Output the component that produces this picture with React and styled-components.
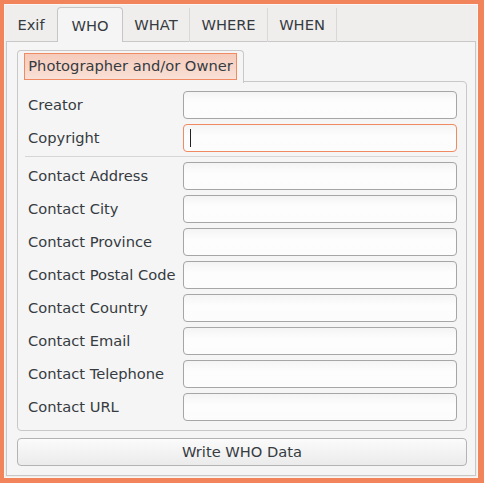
import React from 'react';
import styled, { createGlobalStyle } from 'styled-components';

const GlobalStyle = createGlobalStyle`
  body {
    margin: 0;
    font-family: "DejaVu Sans", "Liberation Sans", sans-serif;
    font-size: 14.67px;
    color: #363b41;
  }
`;

const Frame = styled.div`
  width: 484px;
  height: 483px;
  box-sizing: border-box;
  background: #f1845a;
  padding: 4px 6px 5px 4px;
`;

const Window = styled.div`
  height: 100%;
  box-sizing: border-box;
  border: 1px solid #fbf6f3;
  background: #efeeec;
  display: flex;
  flex-direction: column;
  padding: 0 1px 1px 1px;
`;

const TabBar = styled.div`
  display: flex;
  height: 37px;
  margin: 0 -1px -1px -1px;
  position: relative;
  z-index: 1;
`;

const Tab = styled.div`
  box-sizing: border-box;
  width: ${({ w }) => w}px;
  display: flex;
  align-items: center;
  justify-content: center;
  margin-top: ${({ active }) => (active ? 2 : 3)}px;
  padding-bottom: ${({ active }) => (active ? 0 : 1)}px;
  background: ${({ active }) => (active ? '#f5f5f5' : 'transparent')};
  border: ${({ active }) => (active ? '1px solid #c6c6c6' : 'none')};
  border-bottom: none;
  border-right: ${({ active, sep }) =>
    active ? '1px solid #c6c6c6' : sep ? '1px solid #d8d8d8' : 'none'};
  border-radius: ${({ active }) => (active ? '4px 4px 0 0' : '0')};
`;

const Pane = styled.div`
  flex: 1;
  border: 1px solid #c8c8c8;
  background: #f5f5f5;
  padding: 8px 8px 8px 10px;
  display: flex;
  flex-direction: column;
`;

const SubTabBar = styled.div`
  display: flex;
  height: 32px;
  margin-bottom: -1px;
  position: relative;
  z-index: 1;
`;

const SubTab = styled.div`
  box-sizing: border-box;
  width: 227px;
  height: 33px;
  border: 1px solid #c8c8c8;
  border-bottom: none;
  border-radius: 4px 4px 0 0;
  background: #f5f5f5;
  padding: 2px 6px 0 6px;
`;

const FocusLabel = styled.div`
  box-sizing: border-box;
  height: 27px;
  border: 1px solid #f08a62;
  background: linear-gradient(#f5cbbb, #f9e0d6);
  display: flex;
  align-items: center;
  justify-content: center;
  white-space: nowrap;
  padding-bottom: 2px;
`;

const GroupBox = styled.div`
  border: 1px solid #c8c8c8;
  border-radius: 0 4px 4px 4px;
  padding: 9px 9px 9px 10px;
  display: flex;
  flex-direction: column;
  gap: 5px;
`;

const Row = styled.div`
  display: flex;
  align-items: center;
  height: 28px;
`;

const Label = styled.div`
  width: 155px;
  white-space: nowrap;
  padding-bottom: 2px;
`;

const Field = styled.div`
  box-sizing: border-box;
  width: 275px;
  height: 28px;
  border: 1px solid ${({ focused }) => (focused ? '#ef8a62' : '#a6a6a6')};
  border-radius: 4px;
  background: linear-gradient(#f4f4f4, #fdfdfd 40%, #fcfcfc);
  display: flex;
  align-items: center;
  padding-left: 6px;
`;

const Caret = styled.span`
  width: 1px;
  height: 18px;
  background: #222;
`;

const Separator = styled.div`
  height: 1px;
  background: #d6d6d6;
  margin: -1px -1px 0 -3px;
`;

const WriteButton = styled.button`
  margin-top: 7px;
  height: 28px;
  box-sizing: border-box;
  border: 1px solid #b4b4b4;
  border-radius: 4px;
  background: linear-gradient(#fbfbfb, #ebebeb);
  font: inherit;
  color: inherit;
  padding: 0 0 2px 0;
`;

const tabs = [
  { name: 'Exif', w: 52 },
  { name: 'WHO', w: 66, active: true },
  { name: 'WHAT', w: 67, sep: true },
  { name: 'WHERE', w: 78, sep: true },
  { name: 'WHEN', w: 69, sep: true },
];

const ownerFields = ['Creator', 'Copyright'];
const contactFields = [
  'Contact Address',
  'Contact City',
  'Contact Province',
  'Contact Postal Code',
  'Contact Country',
  'Contact Email',
  'Contact Telephone',
  'Contact URL',
];

const App = () => (
  <>
    <GlobalStyle />
    <Frame>
      <Window>
        <TabBar>
          {tabs.map((t) => (
            <Tab key={t.name} w={t.w} active={t.active} sep={t.sep}>
              {t.name}
            </Tab>
          ))}
        </TabBar>
        <Pane>
          <SubTabBar>
            <SubTab>
              <FocusLabel>Photographer and/or Owner</FocusLabel>
            </SubTab>
          </SubTabBar>
          <GroupBox>
            {ownerFields.map((f) => (
              <Row key={f}>
                <Label>{f}</Label>
                <Field focused={f === 'Copyright'}>
                  {f === 'Copyright' && <Caret />}
                </Field>
              </Row>
            ))}
            <Separator />
            {contactFields.map((f) => (
              <Row key={f}>
                <Label>{f}</Label>
                <Field />
              </Row>
            ))}
          </GroupBox>
          <WriteButton>Write WHO Data</WriteButton>
        </Pane>
      </Window>
    </Frame>
  </>
);

export default App;
